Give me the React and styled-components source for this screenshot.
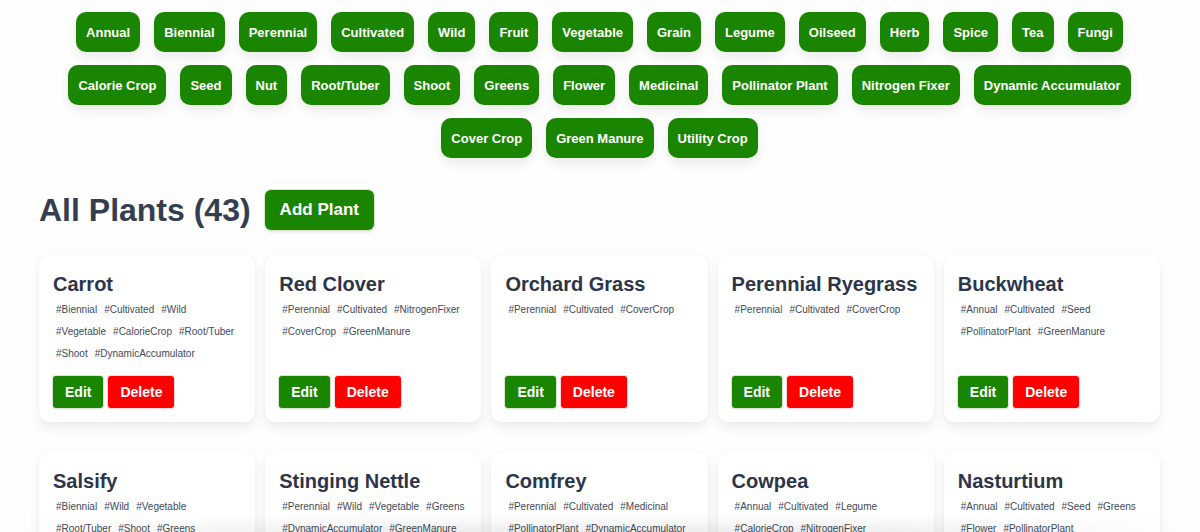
import React from "react";
import styled, { createGlobalStyle } from "styled-components";

const GlobalStyle = createGlobalStyle`
  *, *::before, *::after { box-sizing: border-box; }
  body {
    margin: 0;
    background: #fefefe;
    color: #2c3549;
    font-family: "Liberation Sans", Arial, sans-serif;
  }
`;

const Page = styled.div`
  height: 100vh;
  overflow-y: auto;
  scrollbar-width: none;
`;

const Content = styled.main`
  padding: 12px 40px 30px 39px;
`;

const FilterBar = styled.nav`
  display: flex;
  flex-wrap: wrap;
  justify-content: center;
  gap: 13px 14px;
`;

const Button = styled.button`
  border: 0;
  color: #fff;
  background: ${({ $danger }) => ($danger ? "#ff0000" : "#1a8500")};
  font-family: inherit;
  font-weight: 700;
  white-space: nowrap;
  cursor: pointer;
`;

const FilterButton = styled(Button)`
  height: 40px;
  padding: 0 10px;
  border-radius: 10px;
  font-size: 13px;
  box-shadow: 0 6px 12px rgba(0, 0, 0, 0.08);
`;

const Header = styled.header`
  display: flex;
  align-items: center;
  gap: 14px;
  margin: 32px 0 25px;
`;

const Heading = styled.h1`
  margin: 0;
  font-size: 32px;
  line-height: 40px;
  color: #353e50;
`;

const AddButton = styled(Button)`
  height: 40px;
  padding: 0 15px;
  border-radius: 6px;
  font-size: 17px;
  box-shadow: 0 0 0 1px #d9e6d6, 0 2px 3px rgba(0, 0, 0, 0.12);
`;

const CardGrid = styled.section`
  display: grid;
  grid-template-columns: repeat(5, minmax(0, 1fr));
  gap: 30px 10px;
`;

const Card = styled.article`
  display: flex;
  flex-direction: column;
  min-height: 167px;
  padding: 16px 14px 14px;
  border-radius: 10px;
  background: #fff;
  box-shadow: 0 6px 12px rgba(0, 0, 0, 0.07), 0 0 2px rgba(0, 0, 0, 0.05);
`;

const PlantName = styled.h2`
  margin: 0 0 2px;
  font-size: 20px;
  line-height: 26px;
  white-space: nowrap;
`;

const TagList = styled.ul`
  display: flex;
  flex-wrap: wrap;
  column-gap: 7px;
  margin: 0;
  padding: 0 0 0 3px;
  list-style: none;
`;

const Tag = styled.li`
  font-size: 10px;
  line-height: 22px;
  color: #424956;
`;

const Actions = styled.div`
  display: flex;
  gap: 5px;
  margin-top: auto;
  padding-top: 11px;
`;

const ActionButton = styled(Button)`
  height: 32px;
  padding: 0 12px;
  border-radius: 3px;
  font-size: 14px;
  box-shadow: 0 0 0 1px ${({ $danger }) => ($danger ? "#f6dcdc" : "#d9e6d6")},
    0 1px 2px rgba(0, 0, 0, 0.15);
`;

const BottomShade = styled.div`
  position: fixed;
  inset: auto 0 0 0;
  height: 18px;
  background: linear-gradient(to bottom, rgba(0, 0, 0, 0), rgba(0, 0, 0, 0.07));
  mask-image: linear-gradient(to right, transparent, #000 30%, #000 70%, transparent);
  pointer-events: none;
`;

const filters = [
  "Annual", "Biennial", "Perennial", "Cultivated", "Wild", "Fruit", "Vegetable",
  "Grain", "Legume", "Oilseed", "Herb", "Spice", "Tea", "Fungi", "Calorie Crop",
  "Seed", "Nut", "Root/Tuber", "Shoot", "Greens", "Flower", "Medicinal",
  "Pollinator Plant", "Nitrogen Fixer", "Dynamic Accumulator", "Cover Crop",
  "Green Manure", "Utility Crop",
];

const plants = [
  { name: "Carrot", tags: ["Biennial", "Cultivated", "Wild", "Vegetable", "CalorieCrop", "Root/Tuber", "Shoot", "DynamicAccumulator"] },
  { name: "Red Clover", tags: ["Perennial", "Cultivated", "NitrogenFixer", "CoverCrop", "GreenManure"] },
  { name: "Orchard Grass", tags: ["Perennial", "Cultivated", "CoverCrop"] },
  { name: "Perennial Ryegrass", tags: ["Perennial", "Cultivated", "CoverCrop"] },
  { name: "Buckwheat", tags: ["Annual", "Cultivated", "Seed", "PollinatorPlant", "GreenManure"] },
  { name: "Salsify", tags: ["Biennial", "Wild", "Vegetable", "Root/Tuber", "Shoot", "Greens"] },
  { name: "Stinging Nettle", tags: ["Perennial", "Wild", "Vegetable", "Greens", "DynamicAccumulator", "GreenManure"] },
  { name: "Comfrey", tags: ["Perennial", "Cultivated", "Medicinal", "PollinatorPlant", "DynamicAccumulator"] },
  { name: "Cowpea", tags: ["Annual", "Cultivated", "Legume", "CalorieCrop", "NitrogenFixer"] },
  { name: "Nasturtium", tags: ["Annual", "Cultivated", "Seed", "Greens", "Flower", "PollinatorPlant"] },
];

function PlantCard({ name, tags }) {
  return (
    <Card>
      <PlantName>{name}</PlantName>
      <TagList>
        {tags.map((tag) => (
          <Tag key={tag}>#{tag}</Tag>
        ))}
      </TagList>
      <Actions>
        <ActionButton type="button">Edit</ActionButton>
        <ActionButton type="button" $danger>Delete</ActionButton>
      </Actions>
    </Card>
  );
}

export default function App() {
  return (
    <Page>
      <GlobalStyle />
      <Content>
        <FilterBar aria-label="Plant filters">
          {filters.map((label) => (
            <FilterButton key={label} type="button">{label}</FilterButton>
          ))}
        </FilterBar>
        <Header>
          <Heading>All Plants (43)</Heading>
          <AddButton type="button">Add Plant</AddButton>
        </Header>
        <CardGrid>
          {plants.map((plant) => (
            <PlantCard key={plant.name} {...plant} />
          ))}
        </CardGrid>
      </Content>
      <BottomShade />
    </Page>
  );
}
